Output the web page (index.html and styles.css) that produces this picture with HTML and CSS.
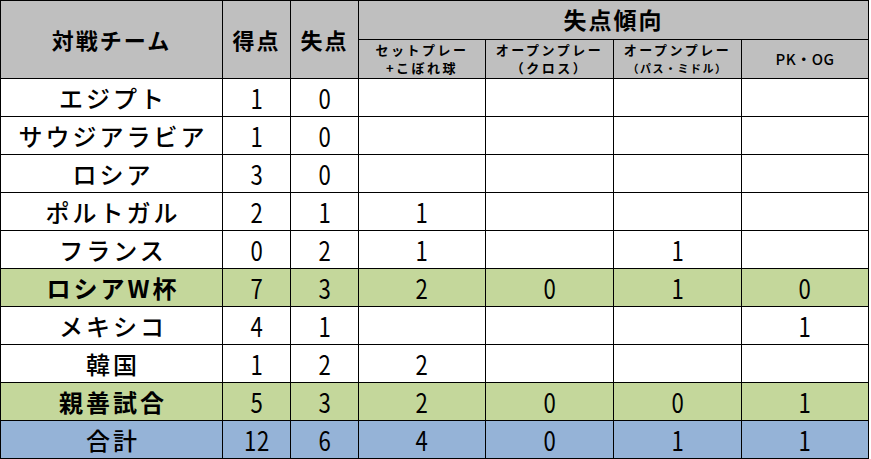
FILE: index.html
```html
<!DOCTYPE html>
<html lang="ja">
<head>
<meta charset="utf-8">
<link rel="stylesheet" href="styles.css">
</head>
<body>
<table class="stats">
  <colgroup>
    <col class="c-team"><col class="c-num"><col class="c-num">
    <col class="c-w127"><col class="c-w128"><col class="c-w128"><col class="c-w127">
  </colgroup>
  <thead>
    <tr class="h1">
      <th rowspan="2" class="th-big">対戦チーム</th>
      <th rowspan="2" class="th-big th-sm">得点</th>
      <th rowspan="2" class="th-big th-sm">失点</th>
      <th colspan="4" class="th-big th-top">失点傾向</th>
    </tr>
    <tr class="h2">
      <th class="sub"><span class="line">セットプレー</span><span class="line">+こぼれ球</span></th>
      <th class="sub"><span class="line">オープンプレー</span><span class="line">（クロス）</span></th>
      <th class="sub"><span class="line">オープンプレー</span><span class="line sub3">（パス・ミドル）</span></th>
      <th class="sub pk">PK・OG</th>
    </tr>
  </thead>
  <tbody>
    <tr><td class="team">エジプト</td><td><span class="n">1</span></td><td><span class="n">0</span></td><td></td><td></td><td></td><td></td></tr>
    <tr><td class="team">サウジアラビア</td><td><span class="n">1</span></td><td><span class="n">0</span></td><td></td><td></td><td></td><td></td></tr>
    <tr><td class="team">ロシア</td><td><span class="n">3</span></td><td><span class="n">0</span></td><td></td><td></td><td></td><td></td></tr>
    <tr><td class="team">ポルトガル</td><td><span class="n">2</span></td><td><span class="n">1</span></td><td><span class="n">1</span></td><td></td><td></td><td></td></tr>
    <tr><td class="team">フランス</td><td><span class="n">0</span></td><td><span class="n">2</span></td><td><span class="n">1</span></td><td></td><td><span class="n">1</span></td><td></td></tr>
    <tr class="sum-green"><td class="team bold">ロシアW杯</td><td><span class="n">7</span></td><td><span class="n">3</span></td><td><span class="n">2</span></td><td><span class="n">0</span></td><td><span class="n">1</span></td><td><span class="n">0</span></td></tr>
    <tr><td class="team">メキシコ</td><td><span class="n">4</span></td><td><span class="n">1</span></td><td></td><td></td><td></td><td><span class="n">1</span></td></tr>
    <tr><td class="team">韓国</td><td><span class="n">1</span></td><td><span class="n">2</span></td><td><span class="n">2</span></td><td></td><td></td><td></td></tr>
    <tr class="sum-green"><td class="team bold">親善試合</td><td><span class="n">5</span></td><td><span class="n">3</span></td><td><span class="n">2</span></td><td><span class="n">0</span></td><td><span class="n">0</span></td><td><span class="n">1</span></td></tr>
    <tr class="sum-blue"><td class="team">合計</td><td><span class="n">12</span></td><td><span class="n">6</span></td><td><span class="n">4</span></td><td><span class="n">0</span></td><td><span class="n">1</span></td><td><span class="n">1</span></td></tr>
  </tbody>
</table>
</body>
</html>
```

FILE: styles.css
```css
html, body {
  margin: 0;
  padding: 0;
  background: #ffffff;
}

body {
  font-family: "Noto Sans CJK JP", "Noto Sans", sans-serif;
  color: #000;
}

.stats {
  border-collapse: collapse;
  table-layout: fixed;
  width: 869px;
}

.c-team { width: 222px; }
.c-num { width: 68px; }
.c-w127 { width: 127px; }
.c-w128 { width: 128px; }

.stats th,
.stats td {
  border: 1px solid #000;
  padding: 0;
  text-align: center;
  vertical-align: middle;
  white-space: nowrap;
}

.stats thead th {
  background: #bfbfbf;
}

.h1 { height: 39px; }
.h2 { height: 39px; }

.th-big {
  font-size: 22px;
  font-weight: 700;
  letter-spacing: 2px;
  line-height: 1.3;
}

.th-top {
  font-size: 23px;
}

.sub {
  font-size: 13px;
  font-weight: 700;
  letter-spacing: 2.5px;
}

.line {
  display: block;
  line-height: 18px;
}

.sub3 {
  font-size: 11px;
  letter-spacing: 1.5px;
}

.pk {
  font-weight: 500;
  font-size: 15px;
  letter-spacing: 0.5px;
  line-height: 1.3;
}

.stats tbody tr { height: 38px; }

.team {
  font-size: 24px;
  font-weight: 500;
  letter-spacing: 3px;
  line-height: 1.3;
  text-indent: 3px;
}

.team.bold { font-weight: 700; }

.n {
  display: inline-block;
  font-size: 27px;
  font-weight: 400;
  line-height: 1.25;
  transform: scaleX(0.82);
  letter-spacing: 1px;
}

.sum-green td { background: #c4d79b; }
.sum-blue td { background: #95b3d7; }
```
